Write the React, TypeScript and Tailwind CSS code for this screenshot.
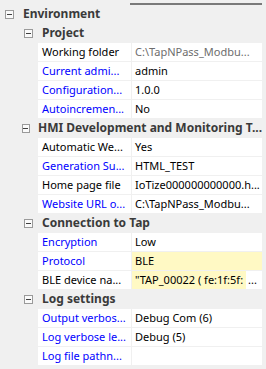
import React from "react";

type Leaf = {
  kind: "leaf";
  name: string;
  value: string;
  nameColor: "black" | "blue";
  valueColor?: "gray" | "black";
  valueBg?: "yellow" | "partial";
};
type Group = { kind: "group"; label: string; level: 0 | 1 };
type Row = Leaf | Group;

const rows: Row[] = [
  { kind: "group", label: "Environment", level: 0 },
  { kind: "group", label: "Project", level: 1 },
  { kind: "leaf", name: "Working folder", value: "C:\\TapNPass_Modbu...", nameColor: "black", valueColor: "gray" },
  { kind: "leaf", name: "Current admi...", value: "admin", nameColor: "blue" },
  { kind: "leaf", name: "Configuration...", value: "1.0.0", nameColor: "blue" },
  { kind: "leaf", name: "Autoincremen...", value: "No", nameColor: "blue" },
  { kind: "group", label: "HMI Development and Monitoring T...", level: 1 },
  { kind: "leaf", name: "Automatic We...", value: "Yes", nameColor: "black" },
  { kind: "leaf", name: "Generation Su...", value: "HTML_TEST", nameColor: "blue" },
  { kind: "leaf", name: "Home page file", value: "IoTize000000000000.h...", nameColor: "black" },
  { kind: "leaf", name: "Website URL o...", value: "C:\\TapNPass_Modbu...", nameColor: "blue" },
  { kind: "group", label: "Connection to Tap", level: 1 },
  { kind: "leaf", name: "Encryption", value: "Low", nameColor: "blue" },
  { kind: "leaf", name: "Protocol", value: "BLE", nameColor: "blue", valueBg: "yellow" },
  { kind: "leaf", name: "BLE device na...", value: "\"TAP_00022 ( fe:1f:5f:", nameColor: "black", valueBg: "partial" },
  { kind: "group", label: "Log settings", level: 1 },
  { kind: "leaf", name: "Output verbos...", value: "Debug Com (6)", nameColor: "blue" },
  { kind: "leaf", name: "Log verbose le...", value: "Debug (5)", nameColor: "blue" },
  { kind: "leaf", name: "Log file pathn...", value: "", nameColor: "blue" },
];

function Minus() {
  return (
    <div className="w-[9px] h-[9px] border border-[#9a9a9a] bg-[#fafafa] flex items-center justify-center">
      <div className="w-[5px] h-px bg-[#404040]" />
    </div>
  );
}

export default function App() {
  return (
    <div
      className="w-[266px] h-[369px] bg-[#f0f0f0] overflow-hidden text-[11px] leading-[18px]"
      style={{ fontFamily: '"Noto Sans", "Open Sans", sans-serif' }}
    >
      <div className="h-[3px]" />
      <div className="flex h-[2px]">
        <div className="w-[130px]" />
        <div className="w-[132px] bg-[#7a7a7a]" />
      </div>
      <div className="flex flex-col gap-px w-[262px]">
        {rows.map((r, i) => {
          if (r.kind === "group") {
            return (
              <div key={i} className="flex items-center h-[18px] whitespace-nowrap overflow-hidden">
                <div className={r.level === 0 ? "w-[5px]" : "w-[24px]"} />
                <Minus />
                <div className="w-[9px]" />
                <span className="font-bold text-[12px] text-[#3a3a3a]">{r.label}</span>
              </div>
            );
          }
          return (
            <div key={i} className="flex h-[18px] whitespace-nowrap">
              <div className="w-[38px]" />
              <div
                className={
                  "w-[93px] bg-white pl-[4px] overflow-hidden " +
                  (r.nameColor === "blue" ? "text-[#0000ff]" : "text-black")
                }
              >
                {r.name}
              </div>
              <div className="w-px" />
              {r.valueBg === "yellow" ? (
                <div className="w-[130px] bg-[#fff9c4] pl-[3px] text-black overflow-hidden">{r.value}</div>
              ) : r.valueBg === "partial" ? (
                <div className="w-[130px] bg-white flex overflow-hidden text-black">
                  <div className="w-[114px] shrink-0 bg-[#fff9c4] pl-[3px] overflow-hidden">{r.value}</div>
                  <span className="pl-[2px]">...</span>
                </div>
              ) : (
                <div
                  className={
                    "w-[130px] bg-white pl-[3px] overflow-hidden " +
                    (r.valueColor === "gray" ? "text-[#6d6d6d]" : "text-black")
                  }
                >
                  {r.value}
                </div>
              )}
            </div>
          );
        })}
      </div>
    </div>
  );
}
